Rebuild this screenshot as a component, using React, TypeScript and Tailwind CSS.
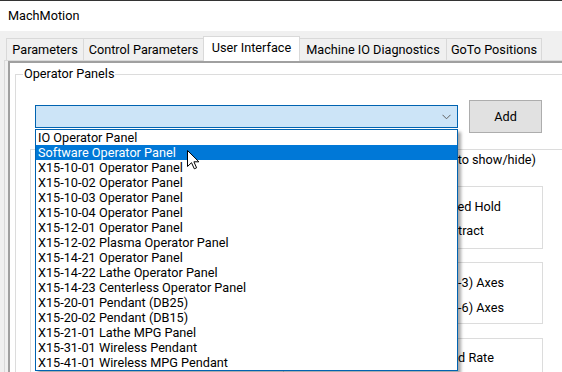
import React from 'react';

const tabs = [
  { label: 'Parameters', width: 'w-[78px]' },
  { label: 'Control Parameters', width: 'w-[121px]' },
  { label: 'User Interface', width: 'w-[97px]', active: true },
  { label: 'Machine IO Diagnostics', width: 'w-[148px]' },
  { label: 'GoTo Positions', width: 'w-[96px]' },
];

const panels = [
  'IO Operator Panel',
  'Software Operator Panel',
  'X15-10-01 Operator Panel',
  'X15-10-02 Operator Panel',
  'X15-10-03 Operator Panel',
  'X15-10-04 Operator Panel',
  'X15-12-01 Operator Panel',
  'X15-12-02 Plasma Operator Panel',
  'X15-14-21 Operator Panel',
  'X15-14-22 Lathe Operator Panel',
  'X15-14-23 Centerless Operator Panel',
  'X15-20-01 Pendant (DB25)',
  'X15-20-02 Pendant (DB15)',
  'X15-21-01 Lathe MPG Panel',
  'X15-31-01 Wireless Pendant',
  'X15-41-01 Wireless MPG Pendant',
];

const Cursor = () => (
  <svg width="13" height="20" viewBox="0 0 13 20" className="absolute left-[187px] top-[149px]">
    <path
      d="M0.5 0.5 L0.5 16.5 L4.5 12.7 L7.3 18.8 L9.6 17.8 L6.9 11.8 L11.9 11.8 Z"
      fill="#ffffff"
      stroke="#000000"
      strokeWidth="1"
      strokeLinejoin="miter"
    />
  </svg>
);

const App = () => {
  return (
    <div className="relative w-[562px] h-[372px] overflow-hidden bg-[#f0f0f0] border-t border-[#333333] text-[12.7px] leading-[16px] text-black font-['Roboto',sans-serif]">
      <div className="h-[30px] bg-white flex items-center pl-[8px]">MachMotion</div>

      <div className="flex items-end h-[29px] pl-[6px]">
        {tabs.map((tab) =>
          tab.active ? (
            <div
              key={tab.label}
              className={`${tab.width} h-[25px] -mb-px -ml-px bg-white border-l border-t border-r border-[#d9d9d9] flex items-start pt-[3px] justify-center z-10 whitespace-nowrap`}
            >
              {tab.label}
            </div>
          ) : (
            <div
              key={tab.label}
              className={`${tab.width} h-[22px] -ml-px first:ml-0 bg-[#f0f0f0] border-l border-t border-r border-[#d9d9d9] flex items-center justify-center pt-[1px] whitespace-nowrap`}
            >
              {tab.label}
            </div>
          )
        )}
      </div>

      <div className="ml-[4px] h-[400px] border-l border-t border-[#d9d9d9] pl-[3px]">
        <div className="h-full bg-white border-l-2 border-t-2 border-[#a0a0a0] pl-[5px] pt-[11px]">
          <div className="relative border-l border-t border-[#dcdcdc] h-[400px]">
            <span className="absolute left-[7px] -top-[9px] bg-white px-[1px]">Operator Panels</span>
            <div className="flex items-center pl-[19px] pt-[25px]">
              <div className="w-[423px] h-[23px] bg-[#cce4f7] border border-[#0063b1] flex items-center justify-end pr-[6px]">
                <svg width="9" height="6" viewBox="0 0 9 6">
                  <path d="M0.5 0.8 L4.5 4.8 L8.5 0.8" fill="none" stroke="#606060" strokeWidth="1" />
                </svg>
              </div>
              <div className="ml-[11px] w-[73px] h-[33px] bg-[#e1e1e1] border border-[#adadad] flex items-center justify-center">
                Add
              </div>
            </div>

            <div className="ml-[14px] mt-[16px] border-l border-t border-[#dcdcdc] h-[300px]">
              <div className="text-right pr-[26px] pt-[2px] whitespace-nowrap">Operator Panel Options (click to show/hide)</div>

              <div className="ml-auto mr-[19px] mt-[18px] w-[260px] h-[63px] border border-[#dcdcdc] pt-[12px] flex flex-col gap-[8px]">
                <div className="text-right pr-[41px]">Show Feed Hold</div>
                <div className="text-right pr-[58px]">Show Retract</div>
              </div>

              <div className="ml-auto mr-[19px] mt-[13px] w-[260px] h-[62px] border border-[#dcdcdc] pt-[12px] flex flex-col gap-[9px]">
                <div className="text-right pr-[38px]">Show Linear (1-3) Axes</div>
                <div className="text-right pr-[38px]">Show Rotary (4-6) Axes</div>
              </div>

              <div className="ml-auto mr-[19px] mt-[14px] w-[260px] h-[60px] border border-[#dcdcdc] pt-[11px]">
                <div className="text-right pr-[48px]">Show Feed Rate</div>
              </div>
            </div>
          </div>
        </div>
      </div>

      <div className="absolute left-[35px] top-[128px] w-[423px] h-[242px] bg-white border border-[#0063b1] shadow-[3px_3px_3px_rgba(0,0,0,0.35)]">
        {panels.map((name, i) => (
          <div
            key={name}
            className={`h-[15px] leading-[15px] pl-[2px] whitespace-nowrap ${
              i === 1 ? 'bg-[#0078d7] text-white' : ''
            }`}
          >
            {name}
          </div>
        ))}
      </div>

      <Cursor />
    </div>
  );
};

export default App;
